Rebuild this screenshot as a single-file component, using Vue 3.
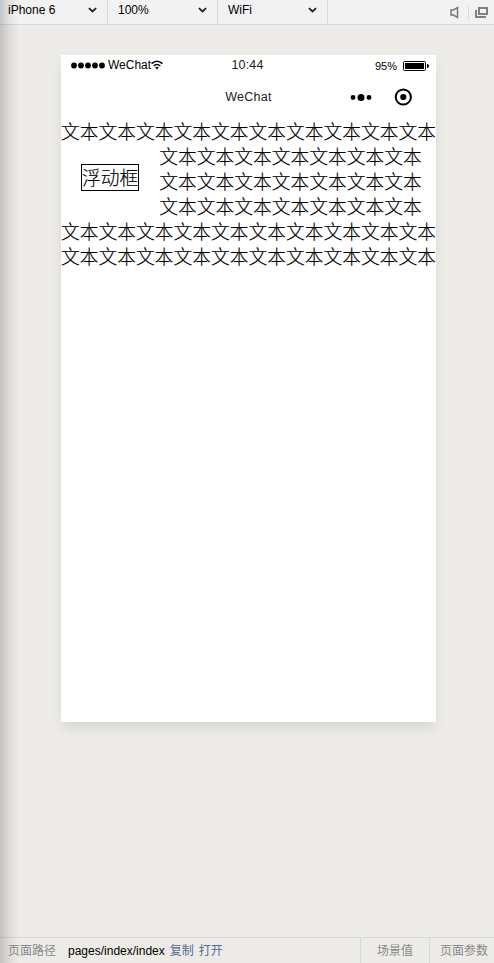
<script setup>
const selects = ['iPhone 6', '100%', 'WiFi']
const pair = '文本'
const firstLine = pair.repeat(10)
const wrappedLines = [7, 7, 7, 10, 10].map((n) => pair.repeat(n))
</script>

<template>
  <div class="simulator">
    <header class="toolbar">
      <div v-for="s in selects" :key="s" class="select">
        <span>{{ s }}</span>
        <svg width="9" height="6" viewBox="0 0 9 6"><path d="M.9 1.2 L4.5 4.5 L8.1 1.2" fill="none" stroke="#222" stroke-width="1.8" /></svg>
      </div>
      <div class="tools">
        <svg class="speaker" width="9" height="13" viewBox="0 0 9 13"><path d="M1 4H3.5L7.5 1.5V11.5L3.5 9H1Z" fill="none" stroke="#777" stroke-width="1.5" /></svg>
        <i class="divider"></i>
        <svg class="windows" width="13" height="11" viewBox="0 0 13 11"><path d="M4 1H12V7H4Z M1 3V10H11" fill="none" stroke="#808080" stroke-width="2" /></svg>
      </div>
    </header>

    <main class="stage">
      <section class="phone">
        <div class="status">
          <div class="carrier">
            <svg width="34" height="7" viewBox="0 0 34 7"><circle v-for="n in 5" :key="n" :cx="n * 7 - 4" cy="3.5" r="2.9" /></svg>
            <span>WeChat</span>
            <svg class="wifi" width="12" height="10" viewBox="0 0 12 10"><path d="M.6 3.6Q6-1.2 11.4 3.6M2.7 6Q6 3 9.3 6" fill="none" stroke="#000" stroke-width="1.5" /><path d="M4.1 7.3Q6 6 7.9 7.3L6 9.5Z" /></svg>
          </div>
          <div class="time">10:44</div>
          <div class="power">
            <span>95%</span>
            <svg width="26" height="10" viewBox="0 0 26 10"><rect x=".5" y=".5" width="22" height="9" rx="1.2" fill="none" stroke="#000" /><rect x="2" y="2" width="19" height="6" /><path d="M24 3Q26 3 26 5Q26 7 24 7Z" /></svg>
          </div>
        </div>
        <div class="nav">
          <div></div>
          <div class="title">WeChat</div>
          <div class="capsule">
            <svg width="22" height="8" viewBox="0 0 22 8"><circle cx="3" cy="4.5" r="2.4" /><circle cx="11" cy="4.5" r="3.5" /><circle cx="19" cy="4.5" r="2.4" /></svg>
            <svg width="18" height="18" viewBox="0 0 18 18"><circle cx="9.3" cy="9" r="7.6" fill="none" stroke="#000" stroke-width="2" /><circle cx="9.3" cy="9" r="3.1" /></svg>
          </div>
        </div>
        <div class="content">
          <div>{{ firstLine }}</div>
          <div class="float-box"><span>浮动框</span></div>
          <div v-for="(line, i) in wrappedLines" :key="i">{{ line }}</div>
        </div>
      </section>
    </main>

    <footer class="footer">
      <div class="path">
        <span class="label">页面路径</span>
        <span class="value">pages/index/index</span>
        <a>复制</a>
        <a>打开</a>
      </div>
      <div class="cell scene">场景值</div>
      <div class="cell params">页面参数</div>
    </footer>
    <div class="edge"></div>
  </div>
</template>

<style>
body { margin: 0; overflow: hidden; }
</style>

<style scoped>
.simulator {
  position: relative;
  display: flex;
  flex-direction: column;
  width: 494px;
  height: 963px;
  overflow: hidden;
  background: #ecebe7;
  color: #000;
  font-family: "Liberation Sans", "Noto Sans CJK SC", sans-serif;
  font-size: 12px;
}
svg { display: block; flex: none; }
.toolbar {
  display: flex;
  box-sizing: border-box;
  height: 25px;
  background: #f2f2f2;
  border-bottom: 1px solid #d9d9d9;
}
.select {
  display: flex;
  box-sizing: border-box;
  width: 110px;
  justify-content: space-between;
  align-items: center;
  padding: 0 10px 4px;
  border-right: 1px solid #d9d9d9;
}
.select:first-child { width: 108px; padding-left: 8px; }
.tools { display: flex; flex: 1; align-items: center; justify-content: flex-end; }
.speaker { margin-right: 9px; }
.divider { width: 1px; height: 15px; margin-right: 6px; background: #ddd; }
.windows { margin-right: 6px; }
.stage { flex: 1; padding: 30px 0 0 61px; }
.phone {
  width: 375px;
  height: 667px;
  background: #fff;
  box-shadow: 0 7px 12px -2px rgba(0, 0, 0, .1);
}
.status {
  display: grid;
  grid-template-columns: 1fr auto 1fr;
  align-items: center;
  height: 20px;
  padding: 0 8px 0 10px;
}
.carrier { display: flex; align-items: center; margin-right: -6px; }
.carrier span { margin-left: 3px; }
.time { margin: 0 4px 0 0; color: #222; font-size: 12.5px; letter-spacing: .15px; }
.power { display: flex; align-items: center; justify-content: flex-end; gap: 6px; padding-top: 2px; margin-right: -1px; font-size: 11px; }
.nav {
  display: grid;
  grid-template-columns: 1fr auto 1fr;
  align-items: center;
  height: 43px;
}
.title { color: #222; font-size: 12.5px; letter-spacing: .3px; }
.capsule { display: flex; align-items: center; justify-content: flex-end; gap: 22px; padding-right: 24px; }
.content {
  font-family: "Noto Sans CJK SC", sans-serif;
  font-size: 18.75px;
  font-weight: 300;
  line-height: 25px;
  white-space: nowrap;
  -webkit-text-stroke: .15px #000;
}
.float-box { float: left; margin: 21px 20px 20px; border: 1px solid #000; }
.float-box span { display: block; margin: -1px 0 1px; }
.footer {
  display: flex;
  box-sizing: border-box;
  height: 26px;
  border-top: 1px solid #d8d8d8;
  line-height: 27px;
  white-space: nowrap;
}
.path { display: flex; flex: 1; padding-left: 8px; }
.label, .cell { color: #888; }
.value { margin: 0 5px 0 12px; }
.path a { margin-right: 5px; color: #576b95; }
.cell { box-sizing: border-box; border-left: 1px solid #d8d8d8; }
.scene { width: 69px; padding-left: 16px; }
.params { width: 65px; padding-left: 10px; }
.edge {
  position: absolute;
  inset: 0 auto 0 0;
  width: 18px;
  background: linear-gradient(to right, rgba(0, 0, 0, .18), rgba(0, 0, 0, .08) 45%, transparent);
}
</style>
